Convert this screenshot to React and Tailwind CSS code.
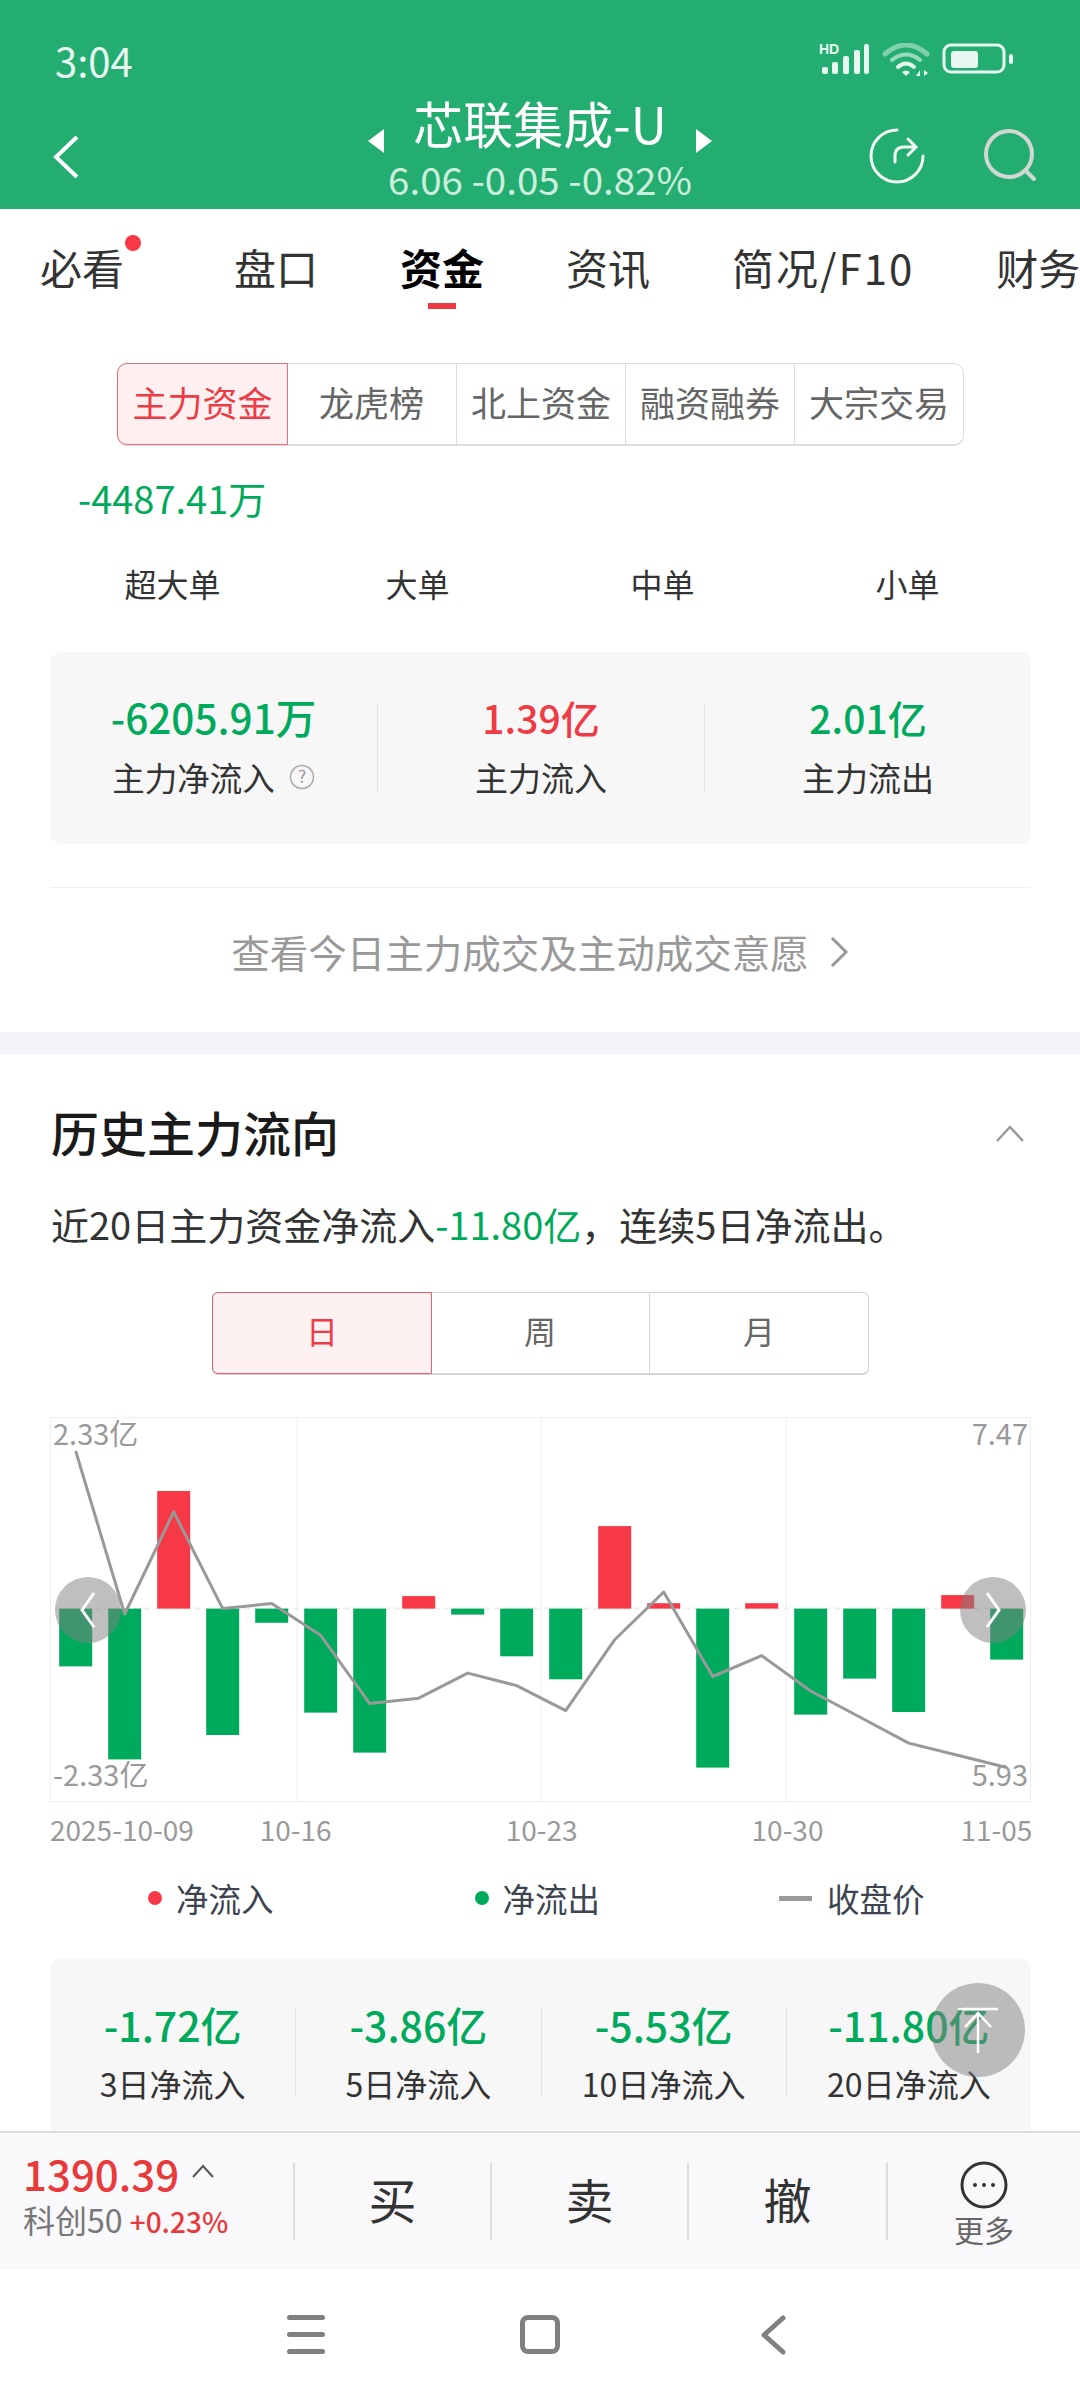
import React from "react";

const bars = [
  -57.8, -150.8, 117.6, -126.4, -14.2, -104, -144, 12.5, -6, -47.7,
  -70.7, 82.5, 5.4, -159, 5.4, -106, -70, -103.4, 13.5, -51,
];

const closePrices = [34, 197, 94.9, 191.6, 186.5, 218.3, 286.6, 281.2, 256.1, 268.6, 293.7, 222.7, 175, 259.5, 238.6, 274, 300, 326.1, 338.3, 350.5];

const periodFlows = [
  { value: "-1.72亿", label: "3日净流入" },
  { value: "-3.86亿", label: "5日净流入" },
  { value: "-5.53亿", label: "10日净流入" },
  { value: "-11.80亿", label: "20日净流入" },
];

function StatusIcons() {
  return (
    <svg width="194" height="36" viewBox="0 0 194 36" className="mr-[67px] mt-[6px]">
      <text x="0" y="11" fill="#e8f7f0" fontSize="14" fontWeight="700" fontFamily="Liberation Sans">HD</text>
      <g fill="#e8f7f0">
        <rect x="3" y="24" width="6" height="7" rx="2" />
        <rect x="13" y="19" width="6" height="12" rx="2" />
        <rect x="24" y="13" width="6" height="18" rx="2" />
        <rect x="35" y="7" width="6" height="24" rx="2" />
        <rect x="45" y="1" width="5" height="30" rx="2" />
      </g>
      <g fill="none" strokeLinecap="round">
        <path d="M66 11 Q87 -7 108 11" stroke="#7fd0ab" strokeWidth="5" />
        <path d="M73 17 Q87 6 101 17" stroke="#e8f7f0" strokeWidth="4" opacity="0.6" />
        <path d="M79 24 Q87 17 95 24" stroke="#e8f7f0" strokeWidth="4" />
      </g>
      <path d="M83 29 L87 33 L91 29 Q87 26 83 29Z" fill="#e8f7f0" />
      <path d="M97 33 L101 27 L101 33Z M105 27 L105 33 L109 30Z" fill="#e8f7f0" />
      <rect x="125" y="2" width="60" height="27" rx="7" fill="none" stroke="#e8f7f0" strokeWidth="3" />
      <rect x="132" y="8" width="27" height="17" rx="3" fill="#e8f7f0" />
      <rect x="190" y="11" width="4" height="10" rx="2" fill="#e8f7f0" />
    </svg>
  );
}

function FlowChart() {
  const zero = 191.6;
  const points = closePrices.map((y, i) => `${25.7 + 49 * i},${y}`).join(" ");

  return (
    <div className="relative ml-[50px] mt-[42px] h-[385px] w-[981px]">
      <svg width="981" height="385" viewBox="0 0 981 385" className="block">
        <rect x="0.5" y="0.5" width="980" height="384" fill="none" stroke="#eeeeee" />
        <path d="M247 0V384M491 0V384M736 0V384" stroke="#eeeeee" fill="none" />
        <path d={`M4 ${zero}H977`} stroke="#eeeeee" strokeWidth="2" strokeDasharray="6 4" />
        {bars.map((h, i) => (
          <rect
            key={i}
            x={9.2 + 49 * i}
            y={h > 0 ? zero - h : zero}
            width="33"
            height={Math.abs(h)}
            fill={h > 0 ? "#f73846" : "#00aa5c"}
          />
        ))}
        <polyline points={points} fill="none" stroke="#999999" strokeWidth="3" strokeLinejoin="round" />
      </svg>
      <span className="absolute left-[3px] top-[-3px] text-[29px] leading-[36px] text-[#999999]">2.33亿</span>
      <span className="absolute right-[3px] top-[-3px] text-[29px] leading-[36px] text-[#999999]">7.47</span>
      <span className="absolute left-[3px] top-[338px] text-[29px] leading-[36px] text-[#999999]">-2.33亿</span>
      <span className="absolute right-[3px] top-[338px] text-[29px] leading-[36px] text-[#999999]">5.93</span>

      <div className="absolute left-[5px] top-[160px] flex h-[66px] w-[66px] items-center justify-center rounded-full bg-[#80808080]">
        <svg width="20" height="40" viewBox="0 0 20 40" fill="none" stroke="#ffffff" strokeWidth="3">
          <path d="M16 3 L4 20 L16 37" />
        </svg>
      </div>
      <div className="absolute left-[910px] top-[160px] flex h-[66px] w-[66px] items-center justify-center rounded-full bg-[#80808080]">
        <svg width="20" height="40" viewBox="0 0 20 40" fill="none" stroke="#ffffff" strokeWidth="3">
          <path d="M4 3 L16 20 L4 37" />
        </svg>
      </div>
    </div>
  );
}

export default function App() {
  return (
    <div className="relative flex h-[2400px] w-[1080px] flex-col overflow-hidden bg-white font-['Noto_Sans_CJK_SC',sans-serif]">
      {/* 顶部绿色区域 */}
      <div className="h-[209px] shrink-0 bg-[#23ad70]">
        <div className="flex h-[91px] items-start justify-between pt-[37px]">
          <span className="ml-[55px] text-[40px] leading-[46px] text-[#e8f7f0]">3:04</span>
          <StatusIcons />
        </div>
        <div className="grid grid-cols-[1fr_auto_1fr]">
          <div className="pl-[50px] pt-[43px]">
            <svg width="32" height="46" viewBox="0 0 32 46" fill="none" stroke="#ffffff" strokeWidth="4">
              <path d="M27 3 L6 23 L27 43" />
            </svg>
          </div>
          <div className="flex flex-col items-center">
            <div className="flex h-[60px] items-center">
              <svg width="16" height="24" viewBox="0 0 16 24" className="mt-[40px]"><path d="M16 0V24L0 12Z" fill="#ffffff" /></svg>
              <span className="mx-[29px] pt-[2px] text-[50px] leading-[60px] text-white">芯联集成-U</span>
              <svg width="16" height="24" viewBox="0 0 16 24" className="mt-[40px]"><path d="M0 0V24L16 12Z" fill="#ffffff" /></svg>
            </div>
            <span className="mt-[5px] text-[38.5px] leading-[44px] text-[#cdeedd]">6.06 -0.05 -0.82%</span>
          </div>
          <div className="flex items-start justify-end pt-[36px]">
            <svg width="58" height="58" viewBox="0 0 58 58" fill="none" stroke="#f2faf6" strokeWidth="3" strokeLinecap="round" className="mr-[56px]">
              <path d="M29 3 A26 26 0 1 0 55 29" />
              <path d="M27 35 V29 Q27 20 36 20 H47" />
              <path d="M40 12 L48 20 L40 28" />
            </svg>
            <svg width="58" height="58" viewBox="0 0 58 58" fill="none" stroke="#d3d7d4" strokeWidth="4" strokeLinecap="round" className="mr-[40px]">
              <circle cx="27" cy="27" r="23" />
              <path d="M44 44 L52 52" />
            </svg>
          </div>
        </div>
      </div>

      {/* 内容区，底部被交易栏盖住 */}
      <div className="min-h-0 flex-1 overflow-hidden">
        <div className="relative flex h-[99px] items-center gap-[82px] whitespace-nowrap pl-[40px] pt-[16px] text-[42px] leading-[50px] text-[#333333]">
          <span className="mr-[28px]">必看</span>
          <span>盘口</span>
          <span className="font-bold text-black">资金</span>
          <span>资讯</span>
          <span className="tracking-[2px]">简况/F10</span>
          <span>财务</span>
          <span className="absolute left-[125px] top-[26px] h-[16px] w-[16px] rounded-full bg-[#f73846]" />
          <span className="absolute bottom-[-1px] left-[428px] h-[6px] w-[28px] bg-[#ee3b45]" />
        </div>

        <div className="ml-[117px] mt-[55px] flex h-[83px] w-[847px] rounded-[10px] border border-b-2 border-[#dddddd] pb-[3px] text-[35px] text-[#666666]">
          <div className="-m-px -mb-[4px] flex w-[171px] items-center justify-center rounded-l-[10px] border border-[#ee6a73] bg-[#fef0f0] pb-[3px] text-[#ee3b45]">主力资金</div>
          <div className="flex w-[169px] items-center justify-center">龙虎榜</div>
          <div className="-mb-[3px] flex w-[169px] items-center justify-center border-l border-[#dddddd] pb-[3px]">北上资金</div>
          <div className="-mb-[3px] flex w-[169px] items-center justify-center border-l border-[#dddddd] pb-[3px]">融资融券</div>
          <div className="-mb-[3px] flex flex-1 items-center justify-center border-l border-[#dddddd] pb-[3px]">大宗交易</div>
        </div>

        <div className="ml-[78px] mt-[29px] text-[38px] leading-[46px] text-[#00aa5c]">-4487.41万</div>

        <div className="ml-[50px] mr-[50px] mt-[42px] grid grid-cols-4 text-center text-[32px] leading-[40px] text-[#333333]">
          <span>超大单</span>
          <span>大单</span>
          <span>中单</span>
          <span>小单</span>
        </div>

        <div className="ml-[50px] mr-[49px] mt-[49px] grid h-[192px] grid-cols-3 items-center rounded-[12px] bg-[#f7f7f7] text-center">
          <div className="flex h-[88px] flex-col items-center justify-center gap-[17px] pb-[6px]">
            <span className="shrink-0 text-[40.5px] font-medium leading-[46px] text-[#00aa5c]">-6205.91万</span>
            <span className="flex shrink-0 items-center text-[32.5px] leading-[40px] text-[#333333]">
              主力净流入
              <svg width="26" height="26" viewBox="0 0 26 26" className="ml-[14px]">
                <circle cx="13" cy="13" r="11.5" fill="none" stroke="#aaaaaa" strokeWidth="1.5" />
                <text x="13" y="19" textAnchor="middle" fontSize="17" fill="#999999">?</text>
              </svg>
            </span>
          </div>
          <div className="flex h-[88px] flex-col items-center justify-center gap-[17px] border-l border-[#e2e2e2] pb-[6px]">
            <span className="shrink-0 text-[39px] font-medium leading-[46px] text-[#ee3b45]">1.39亿</span>
            <span className="shrink-0 text-[33px] leading-[40px] text-[#333333]">主力流入</span>
          </div>
          <div className="flex h-[88px] flex-col items-center justify-center gap-[17px] border-l border-[#e2e2e2] pb-[6px]">
            <span className="shrink-0 text-[39px] font-medium leading-[46px] text-[#00aa5c]">2.01亿</span>
            <span className="shrink-0 text-[33px] leading-[40px] text-[#333333]">主力流出</span>
          </div>
        </div>

        <div className="ml-[50px] mr-[49px] mt-[43px] border-t border-[#eeeeee]" />

        <div className="flex h-[144px] items-center justify-center pb-[16px] text-[38.5px] text-[#999999]">
          查看今日主力成交及主动成交意愿
          <svg width="20" height="32" viewBox="0 0 20 32" fill="none" stroke="#999999" strokeWidth="3" className="ml-[20px]">
            <path d="M3 2 L17 16 L3 30" />
          </svg>
        </div>

        <div className="h-[22px] bg-[#f3f4f8]" />

        <div className="flex items-center justify-between pl-[51px] pr-[55px] pt-[49px]">
          <span className="text-[48px] font-medium leading-[56px] text-[#1a1a1a]">历史主力流向</span>
          <svg width="30" height="18" viewBox="0 0 30 18" fill="none" stroke="#999999" strokeWidth="2.5" className="mt-[6px]">
            <path d="M2 16 L15 2 L28 16" />
          </svg>
        </div>

        <div className="ml-[51px] mt-[41px] text-[38px] leading-[48px] text-[#333333]">
          近20日主力资金净流入<span className="text-[#00aa5c]">-11.80亿</span>，连续5日净流出。
        </div>

        <div className="ml-[212px] mt-[44px] flex h-[83px] w-[657px] rounded-[6px] border border-b-2 border-[#d4d4d4] pb-[6px] text-[32px] text-[#666666]">
          <div className="-m-px -mb-[7px] flex w-[220px] items-center justify-center rounded-l-[6px] border border-[#e8606a] bg-[#fdf1f2] pb-[6px] text-[#ee3b45]">日</div>
          <div className="flex w-[218px] items-center justify-center">周</div>
          <div className="-mb-[6px] flex flex-1 items-center justify-center border-l border-[#d4d4d4] pb-[6px]">月</div>
        </div>

        <FlowChart />

        <div className="mt-[10px] flex pl-[50px] text-[28px] leading-[34px] text-[#999999]">
          <span>2025-10-09</span>
          <span className="ml-[66px]">10-16</span>
          <span className="ml-[174px]">10-23</span>
          <span className="ml-[174px]">10-30</span>
          <span className="ml-[137px]">11-05</span>
        </div>

        <div className="mt-[32px] flex h-[40px] items-center text-[32.5px] text-[#3d4450]">
          <span className="ml-[148px] h-[14px] w-[14px] rounded-full bg-[#f73846]" />
          <span className="ml-[14px]">净流入</span>
          <span className="ml-[201px] h-[14px] w-[14px] rounded-full bg-[#00aa5c]" />
          <span className="ml-[14px]">净流出</span>
          <span className="ml-[179px] h-[5px] w-[33px] bg-[#999999]" />
          <span className="ml-[15px]">收盘价</span>
        </div>

        <div className="ml-[50px] mr-[49px] mt-[40px] grid h-[260px] grid-cols-4 rounded-t-[12px] bg-[#f7f7f7] pt-[49px] text-center">
          {periodFlows.map((item, i) => (
            <div key={item.label} className={`flex h-[90px] flex-col items-center justify-center gap-[16px] ${i > 0 ? "border-l border-[#e2e2e2]" : ""}`}>
              <span className="shrink-0 text-[41px] font-medium leading-[46px] text-[#00aa5c]">{item.value}</span>
              <span className="shrink-0 text-[32px] leading-[40px] text-[#333333]">{item.label}</span>
            </div>
          ))}
        </div>
      </div>

      {/* 底部交易栏 */}
      <div className="flex h-[139px] shrink-0 border-t-2 border-[#dddddd] bg-[#f9f9fb] pt-[30px]">
        <div className="-mt-[12px] w-[293px] pl-[23px]">
          <div className="flex items-center text-[42px] font-medium leading-[44px] text-[#e83a3a]">
            1390.39
            <svg width="24" height="14" viewBox="0 0 24 14" fill="none" stroke="#555555" strokeWidth="2" className="mb-[4px] ml-[12px]">
              <path d="M2 13 L12 2 L22 13" />
            </svg>
          </div>
          <div className="mt-[7px] text-[32px] leading-[34px] text-[#777777]">
            科创50 <span className="text-[28px] font-medium text-[#e83a3a]">+0.23%</span>
          </div>
        </div>
        <div className="flex h-[77px] w-[197px] items-center justify-center border-l-2 border-[#dddddd] pb-[8px] text-[48px] text-[#333333]">买</div>
        <div className="flex h-[77px] w-[197px] items-center justify-center border-l-2 border-[#dddddd] pb-[8px] text-[48px] text-[#333333]">卖</div>
        <div className="flex h-[77px] w-[199px] items-center justify-center border-l-2 border-[#dddddd] pb-[8px] text-[48px] text-[#333333]">撤</div>
        <div className="flex h-[77px] flex-1 flex-col items-center border-l-2 border-[#dddddd]">
          <svg width="48" height="48" viewBox="0 0 48 48" className="-mt-[2px] shrink-0">
            <circle cx="24" cy="24" r="22" fill="none" stroke="#333333" strokeWidth="3" />
            <circle cx="15" cy="24" r="2" fill="#333333" />
            <circle cx="24" cy="24" r="2" fill="#333333" />
            <circle cx="33" cy="24" r="2" fill="#333333" />
          </svg>
          <span className="mt-[3px] shrink-0 text-[30px] leading-[34px] text-[#666666]">更多</span>
        </div>
      </div>

      {/* 系统导航栏 */}
      <div className="flex h-[130px] shrink-0 items-start bg-white pt-[45px]">
        <div className="ml-[287px] flex h-[39px] w-[38px] flex-col justify-between">
          <span className="h-[5px] rounded-full bg-[#808080]" />
          <span className="h-[5px] rounded-full bg-[#808080]" />
          <span className="h-[5px] rounded-full bg-[#808080]" />
        </div>
        <div className="ml-[195px] h-[39px] w-[40px] rounded-[8px] border-[5px] border-[#808080]" />
        <svg width="26" height="40" viewBox="0 0 26 40" fill="none" stroke="#808080" strokeWidth="5" strokeLinecap="round" strokeLinejoin="round" className="ml-[200px]">
          <path d="M23 3 L4 20 L23 37" />
        </svg>
      </div>

      {/* 回到顶部，浮在内容上 */}
      <div className="absolute left-[931px] top-[1983px] flex h-[94px] w-[94px] items-center justify-center rounded-full bg-[#80808080]">
        <svg width="42" height="46" viewBox="0 0 42 46" fill="none" stroke="#ffffff" strokeWidth="2.5">
          <path d="M1 2 H41 M21 6 V46 M8 20 L21 6 L34 20" />
        </svg>
      </div>
    </div>
  );
}
